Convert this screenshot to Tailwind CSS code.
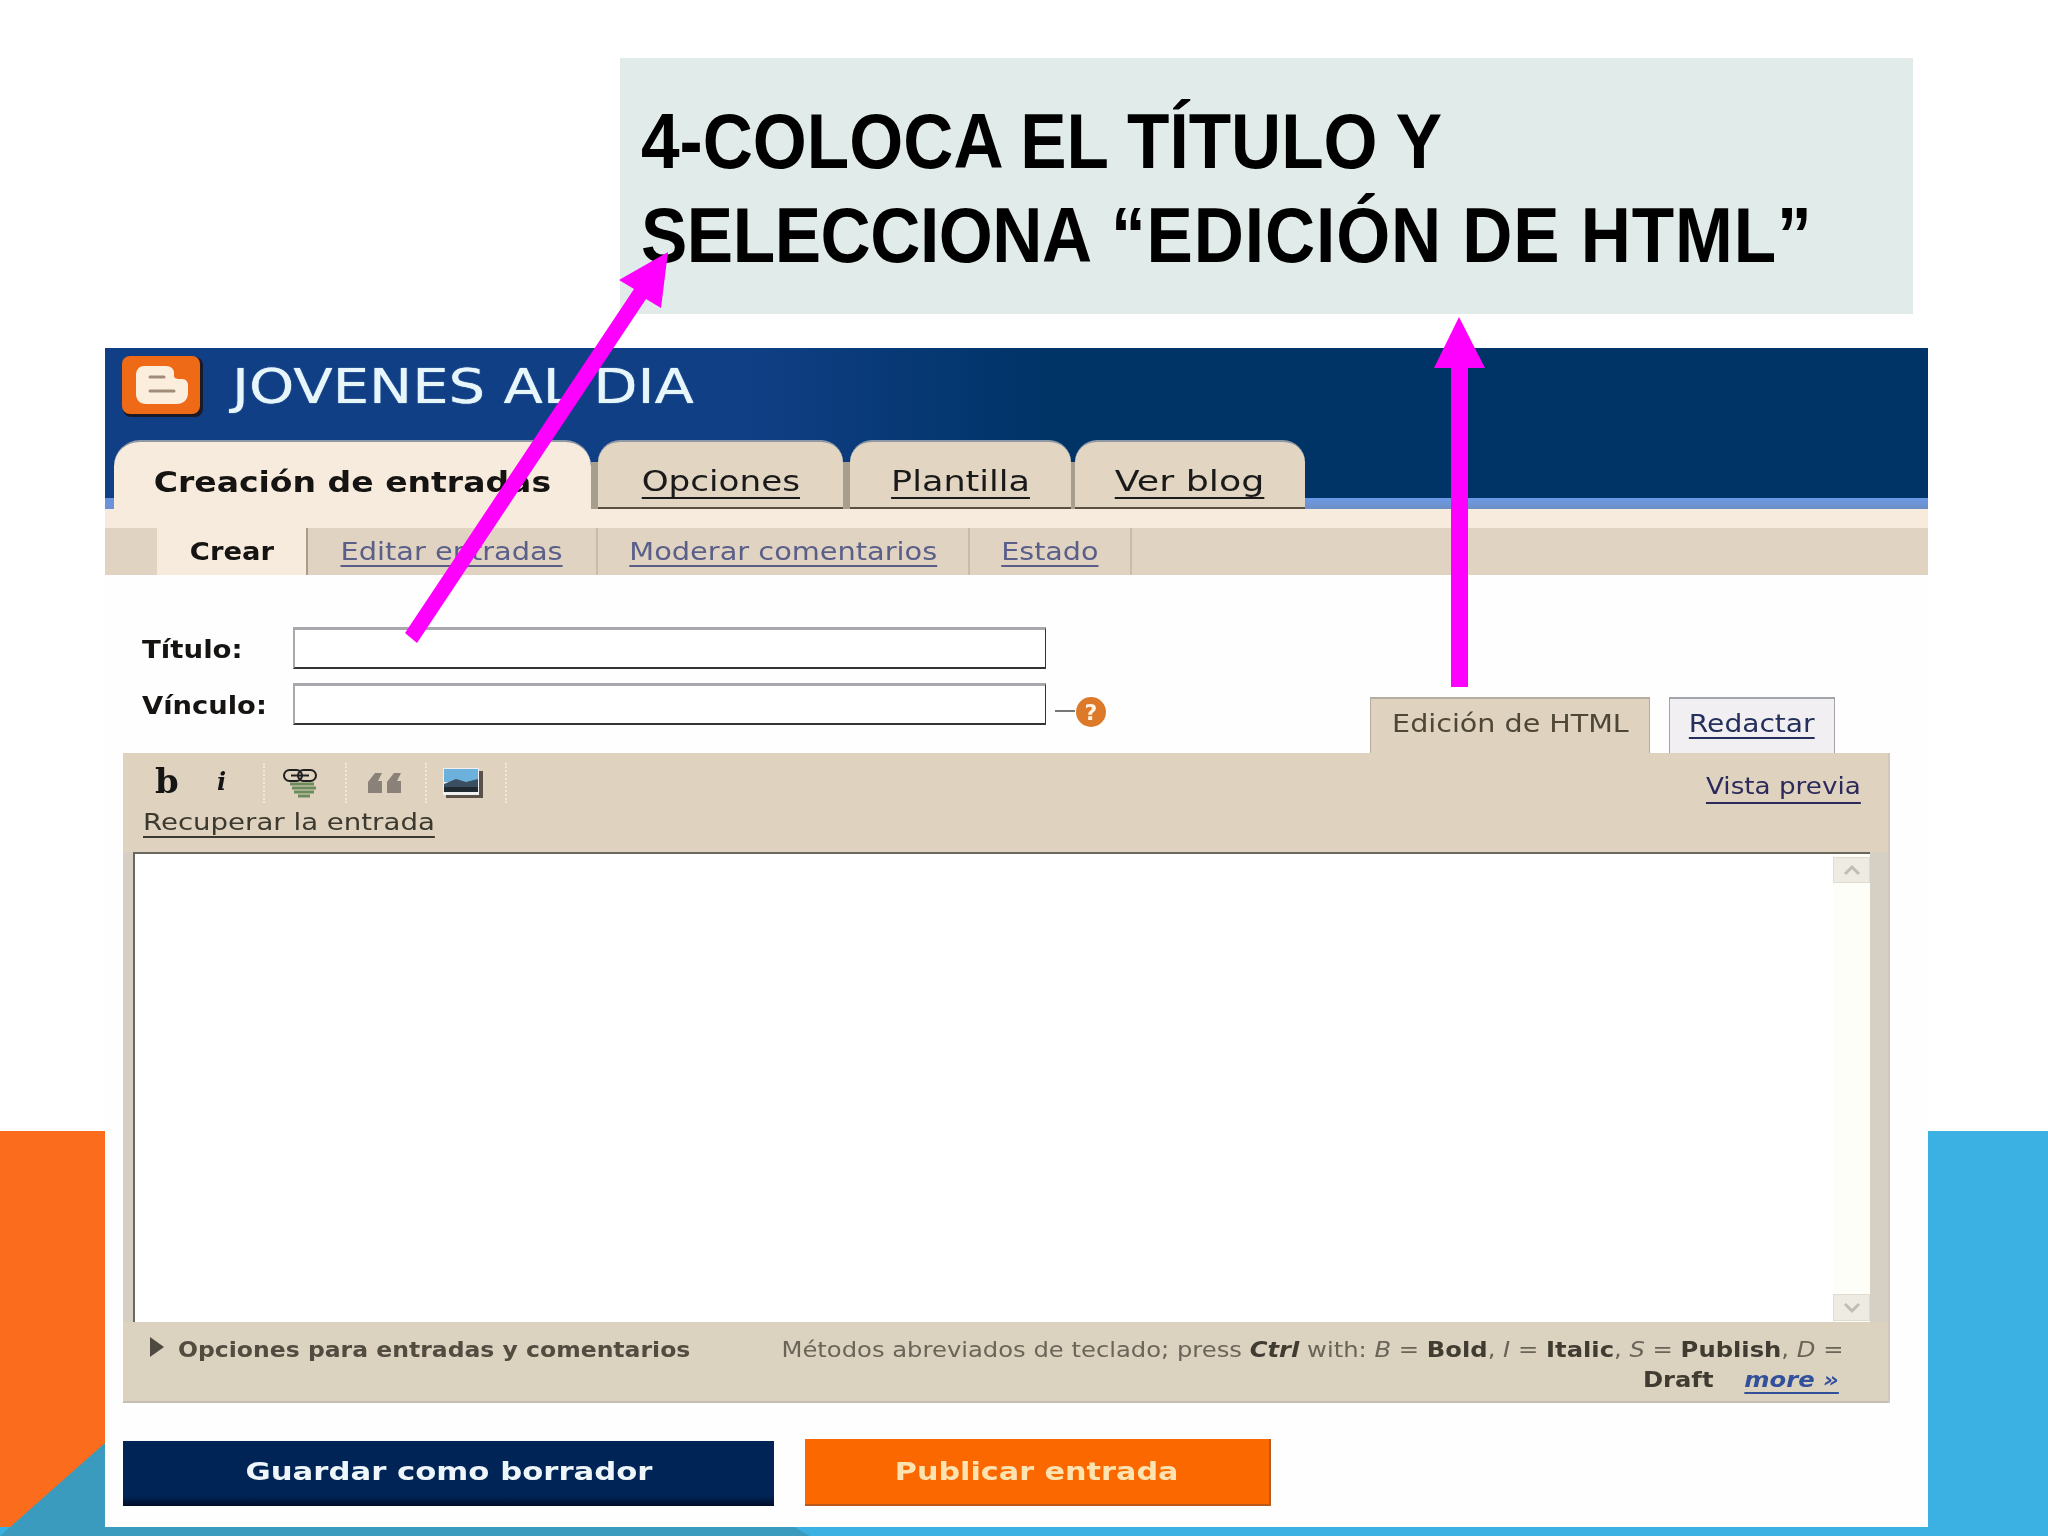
<!DOCTYPE html>
<html lang="es">
<head>
<meta charset="utf-8">
<title>Coloca el título</title>
<script src="https://cdn.jsdelivr.net/npm/@tailwindcss/browser@4"></script>
</head>
<body class="m-0 bg-white">
<div class="relative w-[2048px] h-[1536px] overflow-hidden bg-white font-['DejaVu_Sans',sans-serif]">
  <!-- slide decoration -->
  <div class="absolute left-0 top-[1131px] w-[105px] h-[405px] bg-[#fb6c1c]"></div>
  <div class="absolute right-0 top-[1131px] w-[120px] h-[405px] bg-[#3bb0e2]"></div>
  <div class="absolute left-0 top-[1527px] w-full h-[9px] bg-[#3bb0e2]"></div>
  <svg class="absolute left-0 top-0" width="2048" height="1536" viewBox="0 0 2048 1536"><polygon points="0,1536 105,1443 105,1527 794,1527 810,1536" fill="#3a9bbe"/></svg>

  <!-- title -->
  <div class="relative ml-[620px] pt-[58px] w-[1293px]">
    <h1 class="h-[256px] bg-[#e0ebea] pl-[21px] pt-[36px] text-black font-['Liberation_Sans',sans-serif] font-bold text-[78px] leading-[94px] whitespace-nowrap">
      <span class="block origin-left scale-x-[0.89]">4-COLOCA EL TÍTULO Y<br><span class="tracking-[-0.5px]">SELECCIONA</span> <span class="tracking-[1px]">“EDICIÓN DE HTML”</span></span>
    </h1>
  </div>

  <!-- blogger screenshot -->
  <div class="relative ml-[105px] mt-[34px] w-[1823px] h-[1179px] bg-[#fefefe] flex flex-col blur-[0.7px]">
    <header class="h-[161px] flex flex-col justify-between bg-gradient-to-r from-[#113f86] from-[35%] to-[#003366] to-[52%]">
      <div class="flex items-center h-[82px] pl-[17px]">
        <svg width="82" height="62" viewBox="0 0 82 62" class="mt-[-5px]">
          <rect x="1" y="1" width="80" height="60" rx="8" fill="#1c1a28"/>
          <rect x="0" y="0" width="78" height="58" rx="8" fill="#ef6a17"/>
          <path d="M22 10h22c5 0 8 3 8 7v3c0 2 2 3 5 3h3c4 0 6 3 6 6v8c0 7-5 11-11 11H24c-6 0-10-4-10-10V19c0-5 3-9 8-9z" fill="#fbeedd"/>
          <path d="M28 21h14M28 35h24" stroke="#a08c78" stroke-width="3" stroke-linecap="round"/>
        </svg>
        <span class="ml-[28px] mb-[6px] origin-left scale-x-[1.2] text-[48px] leading-none font-normal text-[#e6f6fa] [text-shadow:0_0_1px_#e6f6fa]">JOVENES AL DIA</span>
      </div>
      <nav class="flex h-[69px]">
        <div class="self-end w-[9px] h-[11px] bg-[#6b92d8]"></div>
        <a class="w-[477px] rounded-t-[26px] border-t-2 border-[#8f99a6] bg-[#f7ebdd] flex items-center justify-center pt-[14px] text-[28px] font-bold text-[#161412]"><span class="inline-block scale-x-[1.18]">Creación de entradas</span></a>
        <div class="self-stretch mt-[22px] w-[7px] bg-[#a89e8e]"></div>
        <a class="w-[245px] rounded-t-[22px] border-t-2 border-b-2 border-t-[#8f99a6] border-b-[#5a5040] bg-[#e2d5c2] flex items-center justify-center pt-[14px] text-[28px] text-[#1a1a1a]"><span class="inline-block scale-x-[1.22] underline underline-offset-[6px] decoration-2">Opciones</span></a>
        <div class="self-stretch mt-[22px] w-[7px] bg-[#a89e8e]"></div>
        <a class="w-[221px] rounded-t-[22px] border-t-2 border-b-2 border-t-[#8f99a6] border-b-[#5a5040] bg-[#e2d5c2] flex items-center justify-center pt-[14px] text-[28px] text-[#1a1a1a]"><span class="inline-block scale-x-[1.25] underline underline-offset-[6px] decoration-2">Plantilla</span></a>
        <div class="self-stretch mt-[22px] w-[4px] bg-[#a89e8e]"></div>
        <a class="w-[230px] rounded-t-[22px] border-t-2 border-b-2 border-t-[#8f99a6] border-b-[#5a5040] bg-[#e2d5c2] flex items-center justify-center pt-[14px] text-[28px] text-[#1a1a1a]"><span class="inline-block scale-x-[1.3] underline underline-offset-[6px] decoration-2">Ver blog</span></a>
        <div class="self-end flex-1 h-[11px] bg-gradient-to-b from-[#6b9ae8] to-[#6f8fc4]"></div>
      </nav>
    </header>
    <div class="h-[19px] bg-[#f7ebdd]"></div>
    <div class="h-[47px] flex bg-[#e1d3c1] text-[24px]">
      <div class="w-[52px]"></div>
      <a class="w-[151px] bg-[#f7ebdd] border-r-2 border-[#a89c8c] flex items-center justify-center font-bold text-[#161412]"><span class="inline-block scale-x-[1.14]">Crear</span></a>
      <a class="w-[290px] border-r-2 border-[#c8bcab] flex items-center justify-center text-[#5a5f8a]"><span class="inline-block scale-x-[1.2] underline underline-offset-[5px] decoration-2">Editar entradas</span></a>
      <a class="w-[372px] border-r-2 border-[#c8bcab] flex items-center justify-center text-[#5a5f8a]"><span class="inline-block scale-x-[1.2] underline underline-offset-[5px] decoration-2">Moderar comentarios</span></a>
      <a class="w-[162px] border-r-2 border-[#c8bcab] flex items-center justify-center text-[#5a5f8a]"><span class="inline-block scale-x-[1.19] underline underline-offset-[5px] decoration-2">Estado</span></a>
    </div>

    <section class="h-[178px] flex justify-between items-end pl-[37px] pr-[93px]">
      <div class="flex flex-col gap-[14px] pb-[28px]">
        <div class="flex items-center">
          <label class="w-[151px] pt-[3px] text-[24px] font-bold text-[#161412]"><span class="inline-block origin-left scale-x-[1.15]">Título:</span></label>
          <div class="w-[753px] h-[42px] bg-white border-t-[3px] border-l-2 border-r border-b-2 border-t-[#a8a8ac] border-l-[#a8a8ac] border-r-[#333] border-b-[#333]"></div>
        </div>
        <div class="flex items-center">
          <label class="w-[151px] pt-[3px] text-[24px] font-bold text-[#161412]"><span class="inline-block origin-left scale-x-[1.14]">Vínculo:</span></label>
          <div class="w-[753px] h-[42px] bg-white border-t-[3px] border-l-2 border-r border-b-2 border-t-[#a8a8ac] border-l-[#a8a8ac] border-r-[#333] border-b-[#333]"></div>
          <svg width="64" height="32" viewBox="0 0 64 32" class="mt-[8px] -mb-[8px]">
            <path d="M9 15h20" stroke="#777" stroke-width="2"/>
            <circle cx="45" cy="16" r="15" fill="#dd7a2a"/>
            <text x="45" y="24" text-anchor="middle" font-size="22" font-weight="700" fill="#fff4e4" font-family="DejaVu Sans">?</text>
          </svg>
        </div>
      </div>
      <div class="flex gap-[19px]">
        <div class="w-[280px] h-[56px] bg-[#dfd2be] border-t-2 border-x border-[#b3ada0] flex justify-center pt-[7px] text-[24px] text-[#4e4636]"><span class="inline-block scale-x-[1.19]">Edición de HTML</span></div>
        <a class="w-[166px] h-[56px] bg-[#f1eff2] border-t-2 border-x border-[#a3a3ab] flex justify-center pt-[7px] text-[24px] text-[#23305c]"><span class="inline-block h-fit scale-x-[1.17] underline underline-offset-[5px] decoration-2">Redactar</span></a>
      </div>
    </section>

    <section class="w-[1767px] h-[650px] ml-[18px] bg-[#dfd2be] flex flex-col border-r-2 border-[#d0c8bc]">
      <div class="h-[99px] flex justify-between">
        <div class="pt-[10px]">
          <div class="flex items-start h-[40px] pl-[32px]">
            <span class="w-[25px] mt-[-2px] font-['DejaVu_Serif',serif] font-bold text-[34px] leading-[40px] text-[#151515]">b</span>
            <span class="w-[11px] ml-[37px] mt-[4px] font-['DejaVu_Serif',serif] font-bold italic text-[24px] leading-[30px] text-[#151515]">i</span>
            <span class="ml-[35px] h-[40px] border-l-2 border-dotted border-[#f2e8d8]"></span>
            <svg class="ml-[18px] mt-[6px]" width="37" height="31" viewBox="0 0 37 31">
              <path d="M7 15h24M9 19h24M11 23h20M15 27h12" stroke="#6c8a5c" stroke-width="3"/>
              <rect x="1" y="1" width="18" height="11" rx="5.5" fill="none" stroke="#202020" stroke-width="2"/>
              <rect x="15" y="1" width="18" height="11" rx="5.5" fill="none" stroke="#202020" stroke-width="2"/>
              <path d="M8 6.500h18" stroke="#202020" stroke-width="2"/>
            </svg>
            <span class="ml-[25px] h-[40px] border-l-2 border-dotted border-[#f2e8d8]"></span>
            <svg class="ml-[21px] mt-[9px]" width="34" height="21" viewBox="0 0 34 21" fill="#8a8278">
              <path d="M0 10 7 1h7l-4 8h4v12H0zM19 10l7-9h7l-4 8h4v12H19z"/>
            </svg>
            <span class="ml-[23px] h-[40px] border-l-2 border-dotted border-[#f2e8d8]"></span>
            <svg class="ml-[16px] mt-[5px]" width="40" height="30" viewBox="0 0 40 30">
              <rect x="3" y="3" width="37" height="27" fill="#5a5248"/>
              <rect width="36" height="27" fill="#eef0f2"/>
              <rect x="1" y="1" width="34" height="13" fill="#6cb0dc"/>
              <path d="M1 16l12-5 10 3 12-3v12H1z" fill="#3a5060"/>
              <rect x="1" y="19" width="34" height="5" fill="#1f2a30"/>
            </svg>
            <span class="ml-[22px] h-[40px] border-l-2 border-dotted border-[#f2e8d8]"></span>
          </div>
          <a class="block ml-[20px] mt-[5px] text-[23px] leading-[28px] text-[#3c3a30]"><span class="inline-block origin-left scale-x-[1.2] underline underline-offset-[6px] decoration-2">Recuperar la entrada</span></a>
        </div>
        <a class="mr-[27px] mt-[19px] h-[30px] text-[23px] leading-[28px] text-[#2c2a5c]"><span class="inline-block origin-right scale-x-[1.14] underline underline-offset-[8px] decoration-2">Vista previa</span></a>
      </div>

      <div class="h-[470px] pl-[10px] pr-[18px] bg-[#d6cfc3]">
        <div class="h-full bg-white border-t-2 border-l-2 border-t-[#6a685e] border-l-[#6a685e] flex justify-end">
          <div class="w-[37px] h-full flex flex-col justify-between bg-[#fefef8] pt-[3px] pb-[1px]">
            <div class="h-[26px] bg-[#eeece2] border border-[#e0dcd0] flex items-center justify-center">
              <svg width="18" height="12" viewBox="0 0 18 12"><path d="M2 10 9 3l7 7" fill="none" stroke="#c0bdb2" stroke-width="3"/></svg>
            </div>
            <div class="h-[27px] bg-[#eeece2] border border-[#e0dcd0] flex items-center justify-center">
              <svg width="18" height="12" viewBox="0 0 18 12"><path d="M2 2l7 7 7-7" fill="none" stroke="#c0bdb2" stroke-width="3"/></svg>
            </div>
          </div>
        </div>
      </div>

      <div class="flex-1 flex justify-between pl-[26px] pr-[44px] pt-[13px] bg-[#dcd2c0] text-[21px] leading-[30px] border-b-2 border-[#c4beb2]">
        <div class="flex items-start">
          <svg class="mt-[1px]" width="16" height="22" viewBox="0 0 16 22"><path d="M1 1l14 10L1 21z" fill="#4f4a40"/></svg>
          <span class="ml-[13px] origin-left scale-x-[1.12] font-bold text-[#524c40] whitespace-nowrap">Opciones para entradas y comentarios</span>
        </div>
        <p class="origin-right scale-x-[1.155] text-right whitespace-nowrap text-[#6a6558]">Métodos abreviados de teclado; press <b class="italic text-[#403c32]">Ctrl</b> with: <i>B</i> = <b class="text-[#403c32]">Bold</b>, <i>I</i> = <b class="text-[#403c32]">Italic</b>, <i>S</i> = <b class="text-[#403c32]">Publish</b>, <i>D</i> =<br><b class="text-[#403c32]">Draft</b> <a class="ml-[20px] mr-[4px] font-bold italic text-[#33509a] underline underline-offset-[5px]">more »</a></p>
      </div>
    </section>

    <div class="flex items-end gap-[31px] ml-[18px] mt-[36px]">
      <button class="w-[651px] h-[65px] pb-[3px] bg-gradient-to-b from-[#002456] from-85% to-[#000d28] text-[#eef6fa] font-bold text-[24px]"><span class="inline-block scale-x-[1.28]">Guardar como borrador</span></button>
      <button class="w-[466px] h-[67px] bg-[#fc6800] border-b-2 border-r-2 border-[#b85a1c] text-[#fde3b0] font-bold text-[24px]"><span class="inline-block scale-x-[1.26]">Publicar entrada</span></button>
    </div>
  </div>

  <!-- annotation arrows -->
  <svg class="absolute left-0 top-0 pointer-events-none" width="2048" height="1536" viewBox="0 0 2048 1536" fill="#ff00ff">
    <polygon points="405,633 417,643 646,299 661,308 668,252 619,280 634,289"/>
    <polygon points="1451,687 1468,687 1468,368 1485,368 1459,317 1434,368 1451,368"/>
  </svg>
</div>
</body>
</html>
